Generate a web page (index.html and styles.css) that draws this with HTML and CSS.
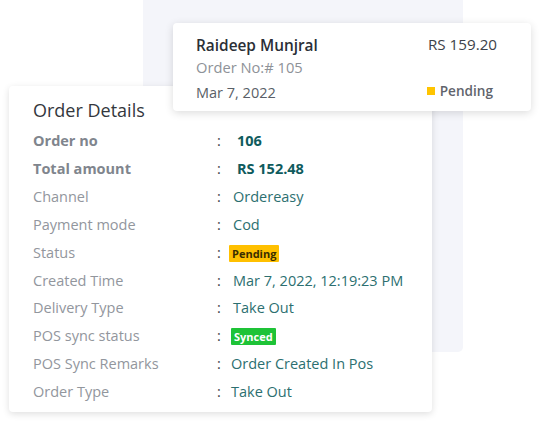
FILE: index.html
```html
<!DOCTYPE html>
<html>
<head>
<meta charset="utf-8">
<link rel="stylesheet" href="styles.css">
</head>
<body>
<div class="stage">
  <div class="panel"></div>
  <div class="details">
    <h2 class="title">Order Details</h2>
    <div class="rows">
      <div class="lbl strong">Order no</div><div class="sep">:</div><div class="val strong">106</div>
      <div class="lbl strong">Total amount</div><div class="sep">:</div><div class="val strong">RS 152.48</div>
      <div class="lbl">Channel</div><div class="sep">:</div><div class="val">Ordereasy</div>
      <div class="lbl">Payment mode</div><div class="sep">:</div><div class="val">Cod</div>
      <div class="lbl">Status</div><div class="sep">:</div><div class="val"><span class="badge pending">Pending</span></div>
      <div class="lbl">Created Time</div><div class="sep">:</div><div class="val">Mar 7, 2022, 12:19:23 PM</div>
      <div class="lbl">Delivery Type</div><div class="sep">:</div><div class="val">Take Out</div>
      <div class="lbl">POS sync status</div><div class="sep">:</div><div class="val"><span class="badge synced">Synced</span></div>
      <div class="lbl">POS Sync Remarks</div><div class="sep">:</div><div class="val tight">Order Created In Pos</div>
      <div class="lbl">Order Type</div><div class="sep">:</div><div class="val tight">Take Out</div>
    </div>
  </div>
  <div class="order-card">
    <div class="oc-row">
      <div class="oc-name">Raideep Munjral</div>
      <div class="oc-price">RS 159.20</div>
    </div>
    <div class="oc-no">Order No:# 105</div>
    <div class="oc-row oc-bottom">
      <div class="oc-date">Mar 7, 2022</div>
      <div class="oc-status"><span class="sq"></span>Pending</div>
    </div>
  </div>
</div>
</body>
</html>
```
FILE: styles.css
```css
* { box-sizing: border-box; }
html, body { margin: 0; padding: 0; background: #ffffff; }
body { font-family: "Open Sans", "Noto Sans", sans-serif; width: 542px; height: 425px; overflow: hidden; }

.stage { display: grid; grid-template-columns: 542px; grid-template-rows: 425px; }
.stage > * { grid-area: 1 / 1; }

.panel {
  margin-left: 143px; width: 320px; height: 352px;
  background: #f4f5fa; border-radius: 0 0 5px 5px;
}

.details {
  margin: 86px 0 0 9px; width: 423px; height: 326px;
  background: #fff; border-radius: 4px;
  box-shadow: 0 2px 7px rgba(0,0,0,0.13);
  padding: 11px 0 0 24px;
  align-self: start;
}
.title {
  margin: 0 0 4px 0; font-size: 18px; font-weight: 400; color: #33373d;
  line-height: 26px;
}
.rows {
  display: grid; grid-template-columns: 184px 16px auto;
  grid-auto-rows: 27.85px; align-items: center;
  font-size: 14.5px;
}
.lbl { color: #92969d; }
.lbl.strong { color: #80858d; font-weight: 700; }
.sep { color: #3b3f45; }
.val { color: #2c6f70; }
.val.strong { color: #0f5b5d; font-weight: 700; padding-left: 4px; }
.val.tight { margin-left: -2px; }

.badge {
  display: inline-block; font-size: 11px; font-weight: 700; line-height: 17px;
  padding: 0 3px; border-radius: 1px;
}
.pending { background: #ffc000; color: #3a2e00; margin-left: -4px; }
.synced { background: #1ec337; color: #fff; margin-left: -2px; }

.order-card {
  margin: 23px 0 0 173px; width: 358px; height: 88px;
  align-self: start;
  background: #fff; border-radius: 4px;
  box-shadow: 0 2px 8px rgba(0,0,0,0.14);
  padding: 11px 34px 0 23px;
  position: relative;
}
.oc-row { display: flex; justify-content: space-between; align-items: center; }
.oc-name { font-size: 15.4px; font-weight: 600; color: #2b2f36; line-height: 24px; }
.oc-price { font-size: 15.2px; color: #3d424a; line-height: 24px; margin-top: -4px; }
.oc-no { font-size: 14.7px; color: #8e9298; line-height: 20px; margin-top: -1px; }
.oc-bottom { margin-top: 6px; }
.oc-date { font-size: 14.5px; color: #5a5f67; line-height: 20px; }
.oc-status { font-size: 13.6px; color: #5f646c; font-weight: 600; display: flex; align-items: center; margin-top: -5px; margin-right: 4px; }
.sq { width: 8px; height: 8px; background: #ffc400; margin-right: 5px; display: inline-block; }
```
